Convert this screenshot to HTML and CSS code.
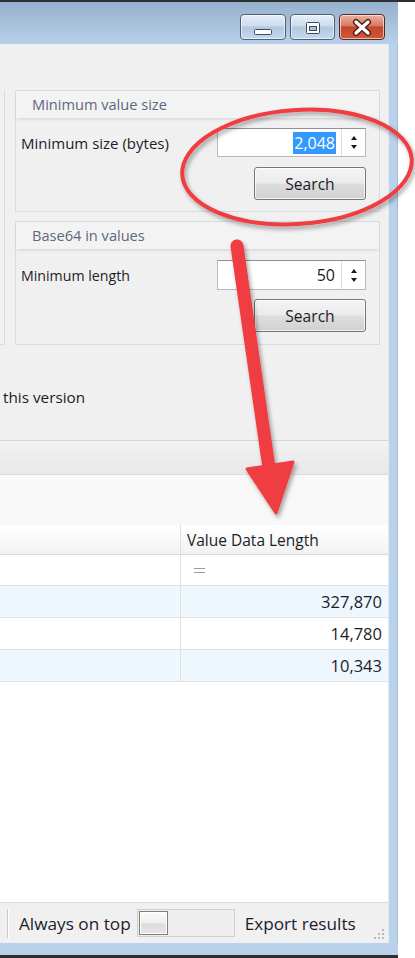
FILE: index.html
```html
<!DOCTYPE html>
<html>
<head>
<meta charset="utf-8">
<link rel="stylesheet" href="styles.css">
</head>
<body>
<div class="screen">
  <div class="topline"></div>
  <div class="window">
    <div class="titlebar">
      <div class="capbtn">
        <svg width="46" height="26" viewBox="0 0 46 26"><rect x="14.5" y="15.5" width="17" height="5" rx="1" fill="#fdfdfd" stroke="#3a4860"/></svg>
      </div>
      <div class="capbtn">
        <svg width="45" height="26" viewBox="0 0 45 26"><rect x="16.5" y="8.5" width="13" height="11" rx="1" fill="#fdfdfd" stroke="#3a4860"/><rect x="19.5" y="12.5" width="7" height="4" fill="#a9bed8" stroke="#3a4860"/></svg>
      </div>
      <div class="capbtn close">
        <svg width="46" height="26" viewBox="0 0 46 26"><path d="M17 8 L29 19 M29 8 L17 19" stroke="#4a1a14" stroke-width="6" stroke-linecap="round"/><path d="M17 8 L29 19 M29 8 L17 19" stroke="#ffffff" stroke-width="3.4" stroke-linecap="round"/></svg>
      </div>
    </div>
    <div class="framerow">
      <div class="client">
        <div class="groups">
          <div class="stub"></div>
          <div class="groupcol">
            <div class="group g1">
              <div class="gtitle">Minimum value size</div>
              <div class="gbody">
                <div class="frow">
                  <span class="label">Minimum size (bytes)</span>
                  <div class="spin">
                    <div class="spintext"><span class="sel">2,048</span></div>
                    <div class="spinbtns"><span class="up"></span><span class="down"></span></div>
                  </div>
                </div>
                <div class="brow"><div class="button">Search</div></div>
              </div>
            </div>
            <div class="group g2">
              <div class="gtitle">Base64 in values</div>
              <div class="gbody">
                <div class="frow">
                  <span class="label">Minimum length</span>
                  <div class="spin">
                    <div class="spintext"><span class="val">50</span></div>
                    <div class="spinbtns"><span class="up"></span><span class="down"></span></div>
                  </div>
                </div>
                <div class="brow"><div class="button">Search</div></div>
              </div>
            </div>
          </div>
        </div>
        <div class="note">this version</div>
        <div class="tabbar"></div>
        <div class="toolarea"></div>
        <div class="grid">
          <div class="grow head"><div class="cell c1"></div><div class="cell c2">Value Data Length</div></div>
          <div class="grow filter"><div class="cell c1"></div><div class="cell c2"><span class="eq"></span></div></div>
          <div class="grow data alt"><div class="cell c1"></div><div class="cell c2 num">327,870</div></div>
          <div class="grow data"><div class="cell c1"></div><div class="cell c2 num">14,780</div></div>
          <div class="grow data alt"><div class="cell c1"></div><div class="cell c2 num">10,343</div></div>
        </div>
        <div class="gridempty"></div>
        <div class="statusbar">
          <div class="sep"></div>
          <span class="stext">Always on top</span>
          <div class="toggle"><div class="knob"></div></div>
          <span class="stext export">Export results</span>
          <svg class="grip" width="12" height="12" viewBox="0 0 12 12">
            <rect x="9" y="1" width="2" height="2" fill="#b9b9b9"/>
            <rect x="5" y="5" width="2" height="2" fill="#b9b9b9"/><rect x="9" y="5" width="2" height="2" fill="#b9b9b9"/>
            <rect x="1" y="9" width="2" height="2" fill="#b9b9b9"/><rect x="5" y="9" width="2" height="2" fill="#b9b9b9"/><rect x="9" y="9" width="2" height="2" fill="#b9b9b9"/>
          </svg>
        </div>
      </div>
      <div class="rframe"></div>
    </div>
    <div class="bframe"></div>
  </div>
  <svg class="annot" width="415" height="958" viewBox="0 0 415 958">
    <defs>
      <filter id="sh" x="-20%" y="-20%" width="140%" height="140%">
        <feDropShadow dx="2" dy="3" stdDeviation="2.2" flood-color="#000" flood-opacity="0.35"/>
      </filter>
    </defs>
    <g filter="url(#sh)">
      <ellipse cx="297" cy="167" rx="115" ry="57" transform="rotate(-4 297 167)" fill="none" stroke="#ef3d42" stroke-width="4"/>
      <line x1="237" y1="246" x2="269" y2="468" stroke="#ef3d42" stroke-width="13" stroke-linecap="round"/>
      <polygon points="247,469 293,462 276,513" fill="#ef3d42" stroke="#ef3d42" stroke-width="3" stroke-linejoin="round"/>
    </g>
  </svg>
</div>
</body>
</html>
```
FILE: styles.css
```css
html, body {
  margin: 0;
  padding: 0;
  background: #ffffff;
}
body {
  font-family: "Open Sans", "Noto Sans", "DejaVu Sans", sans-serif;
  font-size: 15px;
  color: #1c1c24;
}
.screen {
  position: relative;
  width: 415px;
  height: 958px;
  overflow: hidden;
  background: #ffffff;
}
.topline {
  height: 2px;
  background: #2e2e30;
}
.window {
  width: 398px;
  border-bottom: 3px solid #2e2e30;
}
.titlebar {
  height: 42px;
  box-sizing: border-box;
  background: linear-gradient(#96b1ce, #b8d0e9);
  display: flex;
  justify-content: flex-end;
  align-items: flex-start;
  padding: 12px 13px 0 0;
  gap: 4px;
}
.capbtn {
  height: 26px;
  box-sizing: border-box;
  border: 1px solid #4f5f78;
  border-radius: 4px;
  background: linear-gradient(#e6eef8 0%, #cfdcec 45%, #b3c8e1 50%, #c4d7ec 100%);
  box-shadow: inset 0 0 0 1px rgba(255,255,255,0.6);
  display: flex;
  align-items: center;
  justify-content: center;
  overflow: hidden;
}
.capbtn svg { display: block; margin: -1px; }
.close {
  border-color: #5a2620;
  background: linear-gradient(#eab3a4 0%, #d8795f 45%, #c2462b 50%, #d0593c 100%);
}
.framerow {
  display: flex;
}
.client {
  width: 388px;
  height: 899px;
  background: #f0f0f0;
  display: flex;
  flex-direction: column;
}
.rframe {
  width: 10px;
  background: #b9d1ea;
  box-shadow: inset 1px 0 #e4edf7, inset -1px 0 #a2bcd8;
}
.bframe {
  height: 12px;
  background: #b9d1ea;
}

/* groups */
.groups {
  margin-top: 46px;
  height: 255px;
  display: flex;
}
.stub {
  width: 4px;
  border-right: 1px solid #d3dde4;
  border-bottom: 1px solid #d3dde4;
}
.groupcol {
  margin-left: 10px;
  width: 365px;
  display: flex;
  flex-direction: column;
  gap: 9px;
}
.group {
  box-sizing: border-box;
  border: 1px solid #d3dde4;
  display: flex;
  flex-direction: column;
}
.g1 { height: 122px; }
.g2 { height: 124px; }
.gtitle {
  height: 27px;
  line-height: 27px;
  padding-left: 16px;
  font-size: 14.6px;
  color: #5d6780;
  background: #f3f3f3;
  box-shadow: 0 2px 3px -1px rgba(0,0,0,0.13);
}
.gbody {
  padding: 10px 13px 0 5px;
  display: flex;
  flex-direction: column;
  gap: 10px;
}
.g2 .gbody { padding-top: 11px; gap: 9px; }
.frow {
  display: flex;
  align-items: center;
  justify-content: space-between;
}
.label {
  font-size: 15px;
  color: #1c1c28;
}
.g2 .label { font-size: 14.2px; }
.spin {
  width: 149px;
  height: 29px;
  box-sizing: border-box;
  border: 1px solid #b5b8bd;
  border-top-color: #8d9096;
  background: #ffffff;
  display: flex;
}
.g2 .spin { height: 30px; }
.spintext {
  flex: 1;
  display: flex;
  align-items: center;
  justify-content: flex-end;
  padding-right: 5px;
}
.sel {
  background: #3399ff;
  color: #ffffff;
  line-height: 22px;
  padding: 0 1px;
  font-size: 16px;
}
.val {
  font-size: 16px;
  padding-right: 1px;
}
.spinbtns {
  width: 23px;
  border-left: 1px solid #dcdcdc;
  display: flex;
  flex-direction: column;
  align-items: center;
  justify-content: center;
  gap: 5px;
}
.up, .down {
  width: 0;
  height: 0;
  border-left: 3.5px solid transparent;
  border-right: 3.5px solid transparent;
}
.up { border-bottom: 4px solid #1a1a1a; }
.down { border-top: 4px solid #1a1a1a; }
.brow {
  display: flex;
  justify-content: flex-end;
}
.button {
  width: 112px;
  height: 33px;
  box-sizing: border-box;
  border: 1px solid #767676;
  border-radius: 3px;
  background: linear-gradient(#f4f4f4 0%, #ebebeb 48%, #dddddd 52%, #d1d1d1 100%);
  box-shadow: inset 0 0 0 1px rgba(255,255,255,0.7);
  display: flex;
  align-items: center;
  justify-content: center;
  font-size: 15.6px;
  color: #1c1c28;
}

.note {
  margin-top: 42px;
  height: 20px;
  line-height: 20px;
  padding-left: 3px;
  font-size: 15.3px;
}
.tabbar {
  margin-top: 33px;
  height: 35px;
  box-sizing: border-box;
  border-top: 1px solid #d6d6d6;
  border-bottom: 1px solid #dedede;
  background: linear-gradient(#f2f2f2, #e8e8e8);
}
.toolarea {
  height: 50px;
  background: #f8f8f8;
}
.grid {
  background: #ffffff;
}
.grow {
  display: grid;
  grid-template-columns: 181px 1fr;
  box-sizing: border-box;
  border-bottom: 1px solid #e1e1e1;
}
.head {
  height: 30px;
  background: linear-gradient(#ffffff, #f2f2f2);
  border-bottom-color: #d9d9d9;
}
.filter { height: 31px; }
.data { height: 32px; }
.alt { background: #eef6fe; }
.cell {
  display: flex;
  align-items: center;
  font-size: 15.5px;
}
.c1 { border-right: 1px solid #e1e1e1; }
.c2 { padding-left: 6px; }
.num {
  justify-content: flex-end;
  padding-right: 6px;
  font-size: 16.5px;
}
.eq {
  margin-left: 7px;
  width: 11px;
  height: 3px;
  border-top: 1px solid #9a9a9a;
  border-bottom: 1px solid #9a9a9a;
}
.gridempty {
  height: 220px;
  background: #ffffff;
}
.statusbar {
  height: 41px;
  box-sizing: border-box;
  border-top: 1px solid #dcdcdc;
  background: #f0f0f0;
  display: flex;
  align-items: center;
  padding-left: 7px;
}
.sep {
  width: 1px;
  height: 29px;
  background: #cacaca;
  box-shadow: 1px 0 #ffffff;
  margin-right: 11px;
}
.stext {
  font-size: 17.2px;
  color: #1c1c28;
}
.toggle {
  margin-left: 6px;
  width: 98px;
  height: 28px;
  box-sizing: border-box;
  border: 1px solid #d0d0d0;
  background: #eeeeee;
  display: flex;
  align-items: center;
  padding-left: 1px;
}
.knob {
  width: 29px;
  height: 24px;
  box-sizing: border-box;
  border: 1px solid #7e7e7e;
  background: linear-gradient(#fbfbfb 0%, #efefef 50%, #dcdcdc 55%, #e6e6e6 100%);
  box-shadow: inset 0 0 0 1px #ffffff;
}
.export { margin-left: 10px; }
.grip {
  margin-left: auto;
  margin-right: 3px;
  align-self: flex-end;
  margin-bottom: 3px;
}
.annot {
  position: absolute;
  left: 0;
  top: 0;
  pointer-events: none;
}
```
